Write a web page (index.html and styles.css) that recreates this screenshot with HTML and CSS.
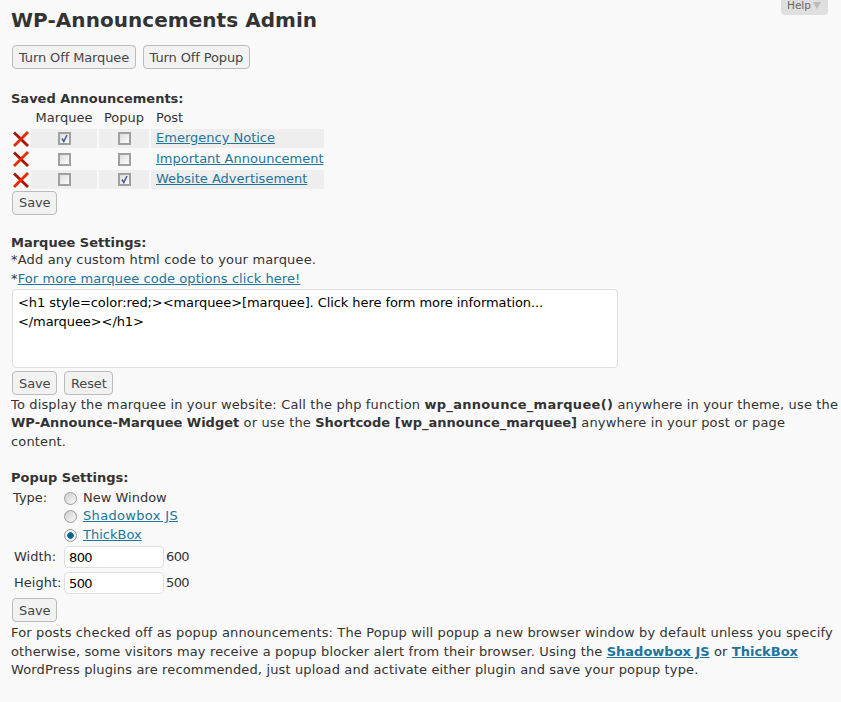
FILE: index.html
```html
<!DOCTYPE html>
<html lang="en">
<head>
<meta charset="utf-8">
<title>WP-Announcements Admin</title>
<link rel="stylesheet" href="styles.css">
</head>
<body>
<div class="help-tab"><span>Help</span><i class="help-arrow"></i></div>
<main class="wrap">
  <h1>WP-Announcements Admin</h1>
  <div class="btn-row top-row">
    <button class="btn">Turn Off Marquee</button>
    <button class="btn">Turn Off Popup</button>
  </div>

  <section class="saved">
    <h2>Saved Announcements:</h2>
    <table class="ann">
      <thead>
        <tr><th></th><th class="c-m">Marquee</th><th class="c-p">Popup</th><th class="c-t">Post</th></tr>
      </thead>
      <tbody>
        <tr class="shade">
          <td class="c-x"><svg class="x" viewBox="0 0 16 16"><path d="M1 1.5 L15 15" stroke="#a81400" stroke-width="2.8"/><path d="M15 1 L1 15" stroke="#e82a00" stroke-width="2.8"/></svg></td>
          <td class="c-m"><input type="checkbox" class="cb" checked></td>
          <td class="c-p"><input type="checkbox" class="cb"></td>
          <td class="c-t"><a href="#">Emergency Notice</a></td>
        </tr>
        <tr>
          <td class="c-x"><svg class="x" viewBox="0 0 16 16"><path d="M1 1.5 L15 15" stroke="#a81400" stroke-width="2.8"/><path d="M15 1 L1 15" stroke="#e82a00" stroke-width="2.8"/></svg></td>
          <td class="c-m"><input type="checkbox" class="cb"></td>
          <td class="c-p"><input type="checkbox" class="cb"></td>
          <td class="c-t"><a href="#">Important Announcement</a></td>
        </tr>
        <tr class="shade">
          <td class="c-x"><svg class="x" viewBox="0 0 16 16"><path d="M1 1.5 L15 15" stroke="#a81400" stroke-width="2.8"/><path d="M15 1 L1 15" stroke="#e82a00" stroke-width="2.8"/></svg></td>
          <td class="c-m"><input type="checkbox" class="cb"></td>
          <td class="c-p"><input type="checkbox" class="cb" checked></td>
          <td class="c-t"><a href="#">Website Advertisement</a></td>
        </tr>
      </tbody>
    </table>
    <div class="btn-row"><button class="btn">Save</button></div>
  </section>

  <section class="marquee">
    <h2>Marquee Settings:</h2>
    <p class="note">*Add any custom html code to your marquee.</p>
    <p class="note">*<a href="#">For more marquee code options click here!</a></p>
    <textarea class="code" spellcheck="false">&lt;h1 style=color:red;&gt;&lt;marquee&gt;[marquee]. Click here form more information...
&lt;/marquee&gt;&lt;/h1&gt;</textarea>
    <div class="btn-row"><button class="btn">Save</button><button class="btn">Reset</button></div>
    <p class="para">To display the marquee in your website: Call the php function <b class="fn">wp_announce_marquee()</b> anywhere in your theme, use the <b>WP-Announce-Marquee Widget</b> or use the <b>Shortcode [wp_announce_marquee]</b> anywhere in your post or page content.</p>
  </section>

  <section class="popup">
    <h2>Popup Settings:</h2>
    <div class="type-grid">
      <span class="lbl">Type:</span>
      <div class="radios">
        <label class="radio-row"><input type="radio" name="t" class="rb"><span>New Window</span></label>
        <label class="radio-row"><input type="radio" name="t" class="rb"><a class="sbx" href="#">Shadowbox JS</a></label>
        <label class="radio-row"><input type="radio" name="t" class="rb" checked><a href="#">ThickBox</a></label>
      </div>
    </div>
    <div class="dim-row"><span class="lbl dim">Width:</span><input class="num" value="800"><span class="digits">600</span></div>
    <div class="dim-row"><span class="lbl dim">Height:</span><input class="num" value="500"><span class="digits">500</span></div>
    <div class="btn-row"><button class="btn">Save</button></div>
    <p class="para">For posts checked off as popup announcements: The Popup will popup a new browser window by default unless you specify otherwise, some visitors may receive a popup blocker alert from their browser. Using the <a href="#"><b>Shadowbox JS</b></a> or <a href="#"><b>ThickBox</b></a> WordPress plugins are recommended, just upload and activate either plugin and save your popup type.</p>
  </section>
</main>
</body>
</html>
```
FILE: styles.css
```css
* { box-sizing: border-box; }
html, body { margin: 0; padding: 0; }
body {
  background: #f9f9f9;
  color: #333;
  font: 13px/18.5px "DejaVu Sans", Verdana, sans-serif;
  height: 702px;
  overflow: hidden;
  position: relative;
}
.wrap { padding: 0 0 0 11px; }
h1 {
  margin: 0;
  padding-top: 7px;
  height: 45px;
  font-size: 20px;
  line-height: 26px;
  font-weight: bold;
  letter-spacing: 0.05px;
  color: #333;
}
h2 {
  margin: 0;
  font-size: 13px;
  line-height: 18.5px;
  font-weight: bold;
  color: #333;
}
p { margin: 0; }
a { color: #21759b; text-decoration: underline; }
.help-tab {
  position: absolute;
  top: 0;
  left: 781px;
  width: 47px;
  height: 15px;
  background: #dfdfdf;
  border-radius: 0 0 4px 4px;
  font-size: 10.5px;
  line-height: 10px;
  color: #666;
  display: flex;
  gap: 2px;
  padding-left: 6px;
}
.help-arrow {
  width: 0;
  height: 0;
  margin-top: 2px;
  border: 4px solid transparent;
  border-top: 7px solid #bbb;
  border-bottom: 0;
}
.btn-row { display: flex; gap: 7px; padding-left: 1px; }
.top-row { height: 45px; }
.btn {
  height: 24px;
  padding: 1px 5.5px 0 6px;
  border: 1px solid #bbb;
  border-radius: 4px;
  background: #f2f2f2;
  color: #464646;
  letter-spacing: -0.12px;
  font: 13px/20px "DejaVu Sans", Verdana, sans-serif;
}
.ann {
  border-collapse: separate;
  border-spacing: 2px 2px;
  margin: -2px 0 0 -2px;
}
.ann th { font-weight: normal; height: 18px; padding: 0; text-align: center; }
.ann th.c-t { text-align: left; padding-left: 5px; }
.ann td { padding: 0; height: 18.5px; text-align: center; line-height: 18px; }
.shade .c-m, .shade .c-p, .shade .c-t { background: #eee; }
.c-x { width: 18px; }
.c-m { width: 66px; }
.c-p { width: 50px; }
.ann td.c-t { width: 173px; text-align: left; padding-left: 5px; white-space: nowrap; }
.x { display: block; width: 16px; height: 16px; margin: 1px 0 0 2px; }
.cb {
  appearance: none;
  width: 13px;
  height: 13px;
  margin: 0;
  display: inline-block;
  vertical-align: middle;
  border: 2px solid #a0a0a0;
  background: linear-gradient(135deg, #ddd, #fdfdfd);
}
.cb:checked {
  background:
    url("data:image/svg+xml,%3Csvg xmlns='http://www.w3.org/2000/svg' viewBox='0 0 9 9'%3E%3Cpath d='M2 4.5 L3.8 7.5 L7 1' fill='none' stroke='%234a5a9c' stroke-width='1.6'/%3E%3C/svg%3E") center/9px 9px no-repeat,
    linear-gradient(135deg, #ddd, #fdfdfd);
}
.marquee { margin-top: 19px; }
.marquee h2 { margin-top: 1px; line-height: 17.5px; }
.note { letter-spacing: 0.17px; }
.note a { letter-spacing: 0.07px; }
.code {
  display: block;
  width: 606px;
  height: 79px;
  margin: 1px 0 3px 1px;
  padding: 4px 5px;
  border: 1px solid #dfdfdf;
  border-radius: 4px;
  background: #fff;
  color: #000;
  letter-spacing: -0.08px;
  font: 13px/18.5px "DejaVu Sans", Verdana, sans-serif;
  resize: none;
  overflow: hidden;
}
.para { width: 830px; letter-spacing: 0.14px; }
.para b { letter-spacing: 0; }
.para b.fn { letter-spacing: 0.3px; }
.marquee .para { margin-top: 0.5px; letter-spacing: 0.15px; }
.popup { margin-top: 18px; }
.type-grid { display: flex; padding-left: 2px; margin-top: 1px; }
.lbl { width: 51px; }
.radios { display: flex; flex-direction: column; }
.radio-row { display: flex; align-items: center; gap: 6px; height: 18.5px; }
.sbx { letter-spacing: 0.33px; }
.rb {
  appearance: none;
  width: 13px;
  height: 13px;
  margin: 1px 0 0;
  border-radius: 50%;
  border: 1px solid #999;
  background: linear-gradient(135deg, #ccc, #fafafa);
}
.rb:checked {
  background: radial-gradient(circle, #04527a 0, #1572a0 3px, #eee 3.6px);
}
.dim-row { display: flex; align-items: center; height: 26px; padding-left: 3px; }
.dim { width: 50px; }
.digits { letter-spacing: -0.6px; }
.num {
  width: 100px;
  height: 22px;
  margin-right: 2px;
  padding: 0 4px;
  border: 1px solid #dfdfdf;
  border-radius: 4px;
  background: #fff;
  color: #000;
  letter-spacing: -0.6px;
  font: 13px "DejaVu Sans", Verdana, sans-serif;
}
.popup .btn-row { margin-top: 2px; }
.popup .para { margin-top: 2px; }
```
